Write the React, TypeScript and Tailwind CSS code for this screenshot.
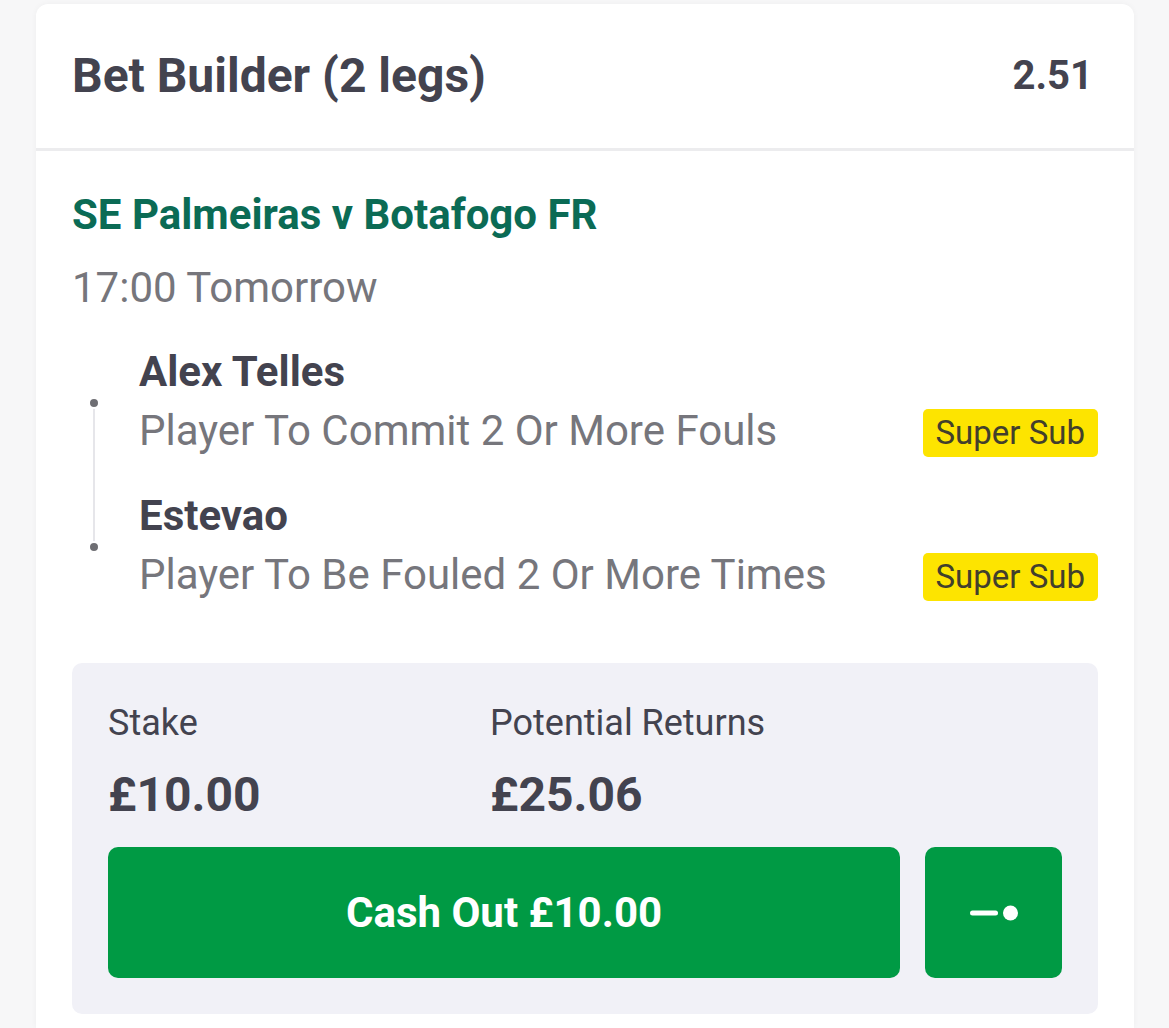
import React from 'react';

const font = { fontFamily: 'Roboto, "Noto Sans", sans-serif' };

interface Leg {
  player: string;
  market: string;
}

const legs: Leg[] = [
  { player: 'Alex Telles', market: 'Player To Commit 2 Or More Fouls' },
  { player: 'Estevao', market: 'Player To Be Fouled 2 Or More Times' },
];

const CashOutIcon = () => (
  <svg width="48" height="16" viewBox="0 0 48 16">
    <rect x="0" y="5.5" width="28" height="5" rx="2.5" fill="#fff" />
    <circle cx="40.5" cy="8" r="7.5" fill="#fff" />
  </svg>
);

export default function App() {
  return (
    <div className="min-h-screen bg-[#f7f7f8] pt-[4px] pl-[36px] pr-[35px]" style={font}>
      <div className="bg-white rounded-t-[12px] shadow-[0_0_6px_rgba(0,0,0,0.04)] min-h-[1024px]">
        {/* Header */}
        <div className="flex items-center justify-between h-[147px] pl-[36px] pr-[41px] border-b-[3px] border-[#ececee]">
          <span className="text-[48px] leading-[56px] font-bold text-[#43434f]">Bet Builder (2 legs)</span>
          <span className="text-[40px] leading-[56px] font-bold text-[#43434f]">2.51</span>
        </div>

        <div className="pl-[36px] pr-[36px] pt-[39px]">
          <div className="text-[42px] leading-[50px] font-bold text-[#0b6b55]">SE Palmeiras v Botafogo FR</div>
          <div className="text-[42px] leading-[50px] text-[#76767c] mt-[23px]">17:00 Tomorrow</div>

          {/* Legs */}
          <div className="relative mt-[34px]">
            <div className="absolute left-[21px] top-[56px] h-[144px] w-[2px] bg-[#e6e6ea]" />
            {legs.map((leg, i) => (
              <div key={i} className={`relative flex items-end pl-[67px] ${i > 0 ? 'mt-[35px]' : ''}`}>
                <span className="absolute left-[16px] top-[50px] w-[12px] h-[12px] rounded-full bg-[#6e6e73] border-2 border-white" />
                <div className="flex-1">
                  <div className="text-[42px] leading-[50px] font-bold text-[#43434f]">{leg.player}</div>
                  <div className="text-[42px] leading-[50px] text-[#76767c] mt-[9px]">{leg.market}</div>
                </div>
                <span className="mb-[-1px] px-[13px] h-[48px] flex items-center rounded-[5px] bg-[#fde400] text-[33px] text-[#423f2c]">
                  Super Sub
                </span>
              </div>
            ))}
          </div>

          {/* Stake panel */}
          <div className="mt-[63px] bg-[#f1f1f7] rounded-[10px] px-[36px] pt-[38px] pb-[36px]">
            <div className="flex">
              <div className="w-[382px]">
                <div className="text-[36px] leading-[44px] text-[#43434f]">Stake</div>
                <div className="text-[48px] leading-[56px] font-bold text-[#43434f] mt-[22px]">£10.00</div>
              </div>
              <div>
                <div className="text-[36px] leading-[44px] text-[#43434f]">Potential Returns</div>
                <div className="text-[48px] leading-[56px] font-bold text-[#43434f] mt-[22px]">£25.06</div>
              </div>
            </div>
            <div className="flex gap-[25px] mt-[24px]">
              <button className="flex-1 h-[131px] rounded-[10px] bg-[#009a44] text-white text-[42px] font-bold">
                Cash Out £10.00
              </button>
              <button className="w-[137px] h-[131px] rounded-[10px] bg-[#009a44] flex items-center justify-center">
                <CashOutIcon />
              </button>
            </div>
          </div>
        </div>
      </div>
    </div>
  );
}
